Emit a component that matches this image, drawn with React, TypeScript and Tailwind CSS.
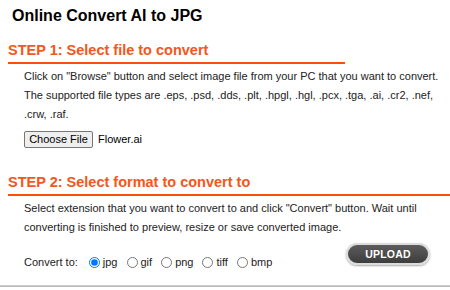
import { useState } from 'react';

const formats = ['jpg', 'gif', 'png', 'tiff', 'bmp'];

function StepHeading({ children, lineClass }: { children: React.ReactNode; lineClass: string }) {
  return (
    <div className={`border-b-2 border-[#ff4d0a] pb-[3px] ${lineClass}`}>
      <h2 className="whitespace-nowrap text-[14.5px] font-bold leading-[18px] text-[#f5561a]">{children}</h2>
    </div>
  );
}

export default function App() {
  const [format, setFormat] = useState('jpg');

  return (
    <div className="w-[450px] h-[290px] overflow-hidden bg-white font-['Liberation_Sans',Arial,sans-serif] text-[#222]">
      <h1 className="pl-[12px] pt-[6px] text-[16px] font-bold leading-[20px] text-black">Online Convert AI to JPG</h1>

      {/* step 1 */}
      <div className="mt-[15px] pl-[8px]">
        <StepHeading lineClass="w-[337px]">STEP 1: Select file to convert</StepHeading>
        <div className="pl-[16px] pt-[3px] text-[11px] leading-[19px] whitespace-nowrap">
          <p>
            Click on "Browse" button and select image file from your PC that you want to convert.
            <br />
            The supported file types are .eps, .psd, .dds, .plt, .hpgl, .hgl, .pcx, .tga, .ai, .cr2, .nef,
            <br />
            .crw, .raf.
          </p>
          <div className="mt-[6px] flex items-center gap-[5px]">
            <button className="h-[17px] w-[69px] rounded-[2px] border border-[#767676] bg-[#efefef] text-[11px] leading-[15px] text-black">
              Choose File
            </button>
            <span className="text-black">Flower.ai</span>
          </div>
        </div>
      </div>

      {/* step 2 */}
      <div className="mt-[24px] pl-[8px]">
        <StepHeading lineClass="w-full">STEP 2: Select format to convert to</StepHeading>
        <div className="pl-[16px] pt-[3px] text-[11px] leading-[19px] whitespace-nowrap">
          <p>
            Select extension that you want to convert to and click "Convert" button. Wait until
            <br />
            converting is finished to preview, resize or save converted image.
          </p>
          <div className="flex h-[37px] justify-between">
            <div className="mt-[16px] flex self-start items-center">
              <span className="mr-[11px]">Convert to:</span>
              {formats.map((f) => (
                <label key={f} className="mr-[9px] flex items-center gap-[3px]">
                  <input
                    type="radio"
                    name="fmt"
                    checked={format === f}
                    onChange={() => setFormat(f)}
                    className="m-0 h-[11px] w-[11px] accent-[#0075ff]"
                  />
                  <span>{f}</span>
                </label>
              ))}
            </div>
            <button className="mr-[20px] mt-[6px] h-[22px] w-[84px] self-start rounded-full border-2 border-[#dcdcdc] bg-gradient-to-b from-[#5c5c5c] to-[#3d3d3d] text-[10.5px] font-extrabold tracking-[0.2px] text-white shadow-[0_1px_2px_rgba(0,0,0,0.35)]">
              UPLOAD
            </button>
          </div>
        </div>
      </div>

      <div className="mt-[11px] h-[2px] bg-[#cdcdcd] border-b border-[#bbbbbb]" />
    </div>
  );
}
